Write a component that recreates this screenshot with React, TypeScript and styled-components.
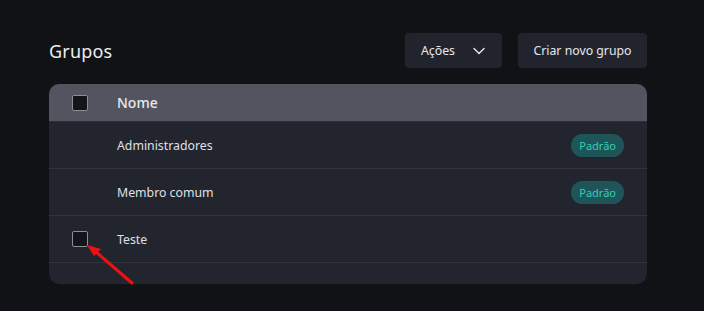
import React from "react";
import styled, { createGlobalStyle } from "styled-components";

const Global = createGlobalStyle`
  html, body { margin: 0; padding: 0; background: #111216; }
  body { font-family: "Noto Sans", "Open Sans", sans-serif; color: #e4e5ea; }
  * { box-sizing: border-box; }
`;

const Page = styled.div`
  width: 704px;
  height: 311px;
  padding: 33px 57px 0 49px;
  position: relative;
  background: #111216;
`;

const TopBar = styled.div`
  display: flex;
  align-items: center;
  justify-content: space-between;
  height: 35px;
  margin-bottom: 16px;
`;

const Title = styled.h1`
  margin: 0;
  font-size: 18px;
  font-weight: 400;
  color: #eceef2;
  letter-spacing: 0.2px;
`;

const Actions = styled.div`
  display: flex;
  gap: 16px;
`;

const Button = styled.button<{ $w: number }>`
  height: 35px;
  width: ${(p) => p.$w}px;
  border: none;
  border-radius: 4px;
  background: #22242d;
  color: #e6e7ec;
  font-family: "Noto Sans", sans-serif;
  font-size: 12.3px;
  display: flex;
  align-items: center;
  justify-content: center;
  gap: 17px;
  padding: 0;
`;

const Table = styled.div`
  width: 598px;
  height: 200px;
  background: #23252e;
  border-radius: 10px;
  overflow: hidden;
`;

const HeaderRow = styled.div`
  height: 38px;
  background: #52555f;
  display: flex;
  align-items: center;
  border-bottom: 1px solid #2b2d36;
`;

const Row = styled.div`
  height: 47px;
  display: flex;
  align-items: center;
  border-bottom: 1px solid #32343d;
  padding-right: 23px;
`;

const CheckCell = styled.div`
  width: 68px;
  display: flex;
  padding-left: 23px;
`;

const Check = styled.div`
  width: 16px;
  height: 16px;
  border: 1.5px solid #8b8e97;
  border-radius: 2px;
  background: #141519;
`;

const NameHead = styled.div`
  font-size: 14px;
  color: #e8e9ee;
  font-weight: 500;
`;

const Name = styled.div`
  flex: 1;
  font-size: 12.3px;
  color: #dfe0e5;
`;

const Badge = styled.span`
  height: 23px;
  padding: 0 8px;
  border-radius: 12px;
  background: #1e5559;
  color: #35cdb2;
  font-size: 11px;
  display: flex;
  align-items: center;
`;

const Arrow = styled.svg`
  position: absolute;
  left: 0;
  top: 0;
  pointer-events: none;
`;

const rows = [
  { name: "Administradores", badge: true, check: false },
  { name: "Membro comum", badge: true, check: false },
  { name: "Teste", badge: false, check: true },
];

export default function App() {
  return (
    <>
      <Global />
      <Page>
        <TopBar>
          <Title>Grupos</Title>
          <Actions>
            <Button $w={97}>
              <span>Ações</span>
              <svg width="14" height="14" viewBox="0 0 14 14" fill="none">
                <path d="M2 4.5l5 5 5-5" stroke="#e6e7ec" strokeWidth="1.4" strokeLinecap="round" strokeLinejoin="round" />
              </svg>
            </Button>
            <Button $w={129}>Criar novo grupo</Button>
          </Actions>
        </TopBar>
        <Table>
          <HeaderRow>
            <CheckCell>
              <Check />
            </CheckCell>
            <NameHead>Nome</NameHead>
          </HeaderRow>
          {rows.map((r) => (
            <Row key={r.name}>
              <CheckCell>{r.check && <Check />}</CheckCell>
              <Name>{r.name}</Name>
              {r.badge && <Badge>Padrão</Badge>}
            </Row>
          ))}
        </Table>
        <Arrow width="704" height="311" viewBox="0 0 704 311">
          <line x1="132" y1="283" x2="96" y2="252" stroke="#f01010" strokeWidth="3" strokeLinecap="round" />
          <polygon points="87,245 101,249 94,256" fill="#f01010" />
        </Arrow>
      </Page>
    </>
  );
}
